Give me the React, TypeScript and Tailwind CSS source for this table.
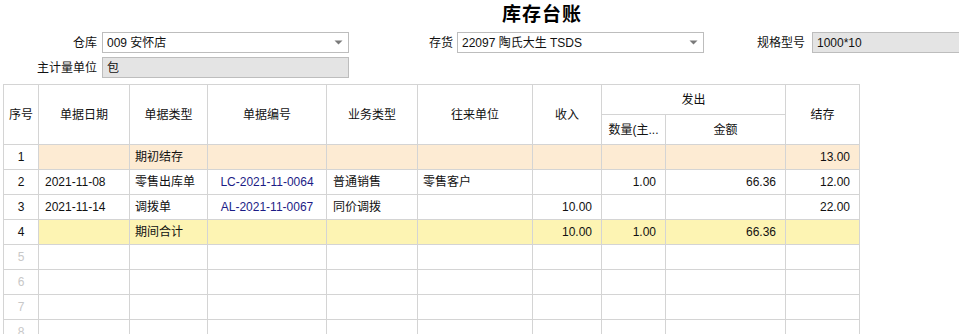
import React from "react";

type Row = {
  no: string;
  date?: string;
  type?: string;
  code?: string;
  biz?: string;
  party?: string;
  inQty?: string;
  outQty?: string;
  outAmt?: string;
  balance?: string;
  tone?: "open" | "total";
  empty?: boolean;
};

const rows: Row[] = [
  { no: "1", type: "期初结存", balance: "13.00", tone: "open" },
  {
    no: "2",
    date: "2021-11-08",
    type: "零售出库单",
    code: "LC-2021-11-0064",
    biz: "普通销售",
    party: "零售客户",
    outQty: "1.00",
    outAmt: "66.36",
    balance: "12.00",
  },
  {
    no: "3",
    date: "2021-11-14",
    type: "调拨单",
    code: "AL-2021-11-0067",
    biz: "同价调拨",
    inQty: "10.00",
    balance: "22.00",
  },
  { no: "4", type: "期间合计", inQty: "10.00", outQty: "1.00", outAmt: "66.36", tone: "total" },
  { no: "5", empty: true },
  { no: "6", empty: true },
  { no: "7", empty: true },
  { no: "8", empty: true },
];

const font = { fontFamily: '"Liberation Sans", "Noto Sans CJK SC", sans-serif' };

function Arrow() {
  return (
    <svg width="9" height="5" viewBox="0 0 9 5" className="shrink-0">
      <path d="M0.5 0.5 L8.5 0.5 L4.5 4.5 Z" fill="#7a7a7a" />
    </svg>
  );
}

function Field({ value, select, width }: { value: string; select?: boolean; width: string }) {
  return (
    <div
      className={`flex h-[21px] shrink-0 items-center justify-between border border-[#bdbdbd] pl-[4px] pr-[5px] text-[12px] text-[#111] ${width} ${
        select ? "bg-white" : "bg-[#e4e4e4]"
      }`}
    >
      <span className="whitespace-nowrap">{value}</span>
      {select && <Arrow />}
    </div>
  );
}

const cell = "border border-[#d4d4d4] p-0 whitespace-nowrap overflow-hidden";

export default function App() {
  return (
    <div className="h-[334px] w-[959px] overflow-hidden bg-white text-[12px] text-[#111]" style={font}>
      {/* title */}
      <div className="pl-[502px] pt-[2px] text-[19px] font-bold leading-[26px] tracking-[1px] text-black">库存台账</div>

      {/* filter form */}
      <div className="mt-[4px] flex items-center">
        <div className="w-[97px] shrink-0 text-right">仓库</div>
        <div className="ml-[5px] shrink-0">
          <Field value="009 安怀店" select width="w-[247px]" />
        </div>
        <div className="w-[104px] shrink-0 text-right">存货</div>
        <div className="ml-[4px] shrink-0">
          <Field value="22097 陶氏大生 TSDS" select width="w-[247px]" />
        </div>
        <div className="w-[101px] shrink-0 text-right">规格型号</div>
        <div className="ml-[7px] shrink-0">
          <Field value="1000*10" width="w-[160px]" />
        </div>
      </div>
      <div className="mt-[4px] flex items-center">
        <div className="w-[97px] shrink-0 text-right">主计量单位</div>
        <div className="ml-[5px] shrink-0">
          <Field value="包" width="w-[247px]" />
        </div>
      </div>

      {/* ledger table */}
      <table className="ml-[3px] mt-[6px] table-fixed border-collapse">
        <colgroup>
          <col className="w-[35px]" />
          <col className="w-[91px]" />
          <col className="w-[78px]" />
          <col className="w-[119px]" />
          <col className="w-[91px]" />
          <col className="w-[115px]" />
          <col className="w-[69px]" />
          <col className="w-[64px]" />
          <col className="w-[120px]" />
          <col className="w-[74px]" />
        </colgroup>
        <thead>
          <tr className="h-[30px]">
            <th rowSpan={2} className={`${cell} font-normal`}>序号</th>
            <th rowSpan={2} className={`${cell} font-normal`}>单据日期</th>
            <th rowSpan={2} className={`${cell} font-normal`}>单据类型</th>
            <th rowSpan={2} className={`${cell} font-normal`}>单据编号</th>
            <th rowSpan={2} className={`${cell} font-normal`}>业务类型</th>
            <th rowSpan={2} className={`${cell} font-normal`}>往来单位</th>
            <th rowSpan={2} className={`${cell} font-normal`}>收入</th>
            <th colSpan={2} className={`${cell} font-normal`}>发出</th>
            <th rowSpan={2} className={`${cell} font-normal`}>结存</th>
          </tr>
          <tr className="h-[30px]">
            <th className={`${cell} font-normal`}>数量(主...</th>
            <th className={`${cell} font-normal`}>金额</th>
          </tr>
        </thead>
        <tbody>
          {rows.map((r) => {
            const bg = r.tone === "open" ? "bg-[#fdebd3]" : r.tone === "total" ? "bg-[#fdf4b3]" : "bg-white";
            return (
              <tr key={r.no} className="h-[25px]">
                <td className={`${cell} bg-white text-center ${r.empty ? "text-[#c8c8c8]" : ""}`}>{r.no}</td>
                <td className={`${cell} ${bg} pl-[6px]`}>{r.date}</td>
                <td className={`${cell} ${bg} pl-[5px]`}>{r.type}</td>
                <td className={`${cell} ${bg} text-center text-[#1c1c86]`}>{r.code}</td>
                <td className={`${cell} ${bg} pl-[6px]`}>{r.biz}</td>
                <td className={`${cell} ${bg} pl-[5px]`}>{r.party}</td>
                <td className={`${cell} ${bg} pr-[9px] text-right`}>{r.inQty}</td>
                <td className={`${cell} ${bg} pr-[9px] text-right`}>{r.outQty}</td>
                <td className={`${cell} ${bg} pr-[9px] text-right`}>{r.outAmt}</td>
                <td className={`${cell} ${bg} pr-[9px] text-right`}>{r.balance}</td>
              </tr>
            );
          })}
        </tbody>
      </table>
    </div>
  );
}
